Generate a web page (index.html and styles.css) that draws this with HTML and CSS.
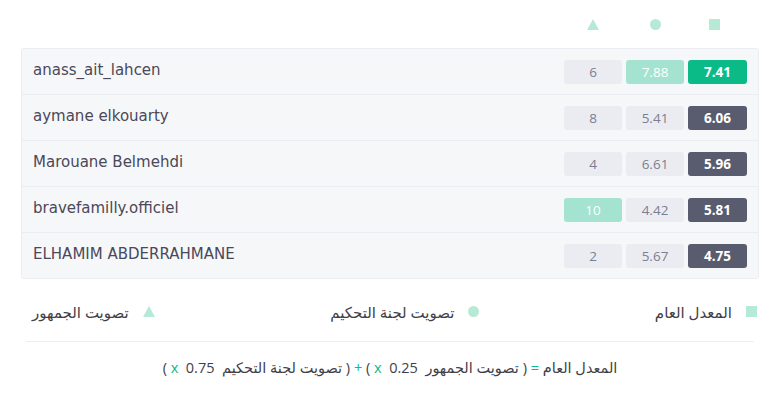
FILE: index.html
```html
<!DOCTYPE html>
<html>
<head>
<meta charset="utf-8">
<link rel="stylesheet" href="styles.css">
</head>
<body>
<div class="page">
  <div class="head">
    <div class="hcell"><span class="tri"></span></div>
    <div class="hcell"><span class="dot"></span></div>
    <div class="hcell"><span class="sq"></span></div>
  </div>
  <div class="table">
    <div class="row">
      <div class="name">anass_ait_lahcen</div>
      <div class="cells"><span class="c">6</span><span class="c lite">7.88</span><span class="c tot green">7.41</span></div>
    </div>
    <div class="row">
      <div class="name">aymane elkouarty</div>
      <div class="cells"><span class="c">8</span><span class="c">5.41</span><span class="c tot">6.06</span></div>
    </div>
    <div class="row">
      <div class="name">Marouane Belmehdi</div>
      <div class="cells"><span class="c">4</span><span class="c">6.61</span><span class="c tot">5.96</span></div>
    </div>
    <div class="row">
      <div class="name">bravefamilly.officiel</div>
      <div class="cells"><span class="c lite">10</span><span class="c">4.42</span><span class="c tot">5.81</span></div>
    </div>
    <div class="row">
      <div class="name">ELHAMIM ABDERRAHMANE</div>
      <div class="cells"><span class="c">2</span><span class="c">5.67</span><span class="c tot">4.75</span></div>
    </div>
  </div>
  <div class="legend" dir="rtl">
    <div class="li"><span class="sq"></span><span>المعدل العام</span></div>
    <div class="li"><span class="dot"></span><span>تصويت لجنة التحكيم</span></div>
    <div class="li"><span class="tri"></span><span>تصويت الجمهور</span></div>
  </div>
  <div class="divider"></div>
  <p class="formula" dir="rtl">المعدل العام <span class="g">=</span> ( تصويت الجمهور&nbsp; <span class="g">x</span>&nbsp; 0.25 ) <span class="g">+</span> ( تصويت لجنة التحكيم&nbsp; <span class="g">x</span>&nbsp; 0.75 )</p>
</div>
</body>
</html>
```
FILE: styles.css
```css
* { box-sizing: border-box; }
body {
  margin: 0;
  background: #fff;
  font-family: "Open Sans", "DejaVu Sans", sans-serif;
  color: #48465b;
}
.page {
  padding: 6px 21px 0 21px;
  width: 780px;
}
.head {
  display: flex;
  justify-content: flex-end;
  gap: 4px;
  padding-right: 12px;
  height: 36px;
  align-items: center;
  margin-bottom: 6px;
}
.hcell {
  width: 58px;
  display: flex;
  justify-content: center;
  align-items: center;
}
.hcell:last-child { width: 59px; padding-right: 6px; }
.tri {
  display: inline-block;
  width: 0; height: 0;
  border-left: 6px solid transparent;
  border-right: 6px solid transparent;
  border-bottom: 11px solid #b6ead7;
}
.dot {
  display: inline-block;
  width: 11px; height: 11px;
  border-radius: 50%;
  background: #b6ead7;
}
.sq {
  display: inline-block;
  width: 11px; height: 11px;
  background: #b6ead7;
}
.table {
  background: #f6f7f9;
  border: 1px solid #ebedf2;
  border-radius: 3px;
}
.row {
  height: 46px;
  display: flex;
  align-items: center;
  justify-content: space-between;
  padding: 0 11px 0 11px;
  border-top: 1px solid #ebedf2;
}
.row:first-child { border-top: none; height: 45px; }
.name {
  font-family: "DejaVu Sans", sans-serif;
  font-size: 15px;
  color: #4a4859;
  margin-top: -3px;
}
.cells {
  display: flex;
  gap: 4px;
  margin-top: 1px;
}
.c {
  width: 58px;
  height: 24px;
  border-radius: 3px;
  background: #ebecf1;
  color: #7b7e90;
  font-size: 13.5px;
  display: flex;
  align-items: center;
  justify-content: center;
}
.c.lite { background: #a4e3cf; color: #fff; }
.c.tot {
  width: 59px;
  background: #595b6e;
  color: #fff;
  font-weight: 700;
}
.c.tot.green { background: #0bbb87; }
.legend {
  display: flex;
  justify-content: space-between;
  align-items: center;
  height: 62px;
  padding: 3px 2px 0 11px;
  font-size: 15px;
  color: #3f4047;
}
.li {
  display: flex;
  align-items: center;
  gap: 14px;
}
.divider {
  margin: 0 5px;
  border-top: 1px solid #ebedf2;
}
.formula {
  margin: 0;
  text-align: center;
  font-size: 14.5px;
  color: #3f4047;
  padding-top: 16px;
}
.g { color: #0bbb87; }
```
